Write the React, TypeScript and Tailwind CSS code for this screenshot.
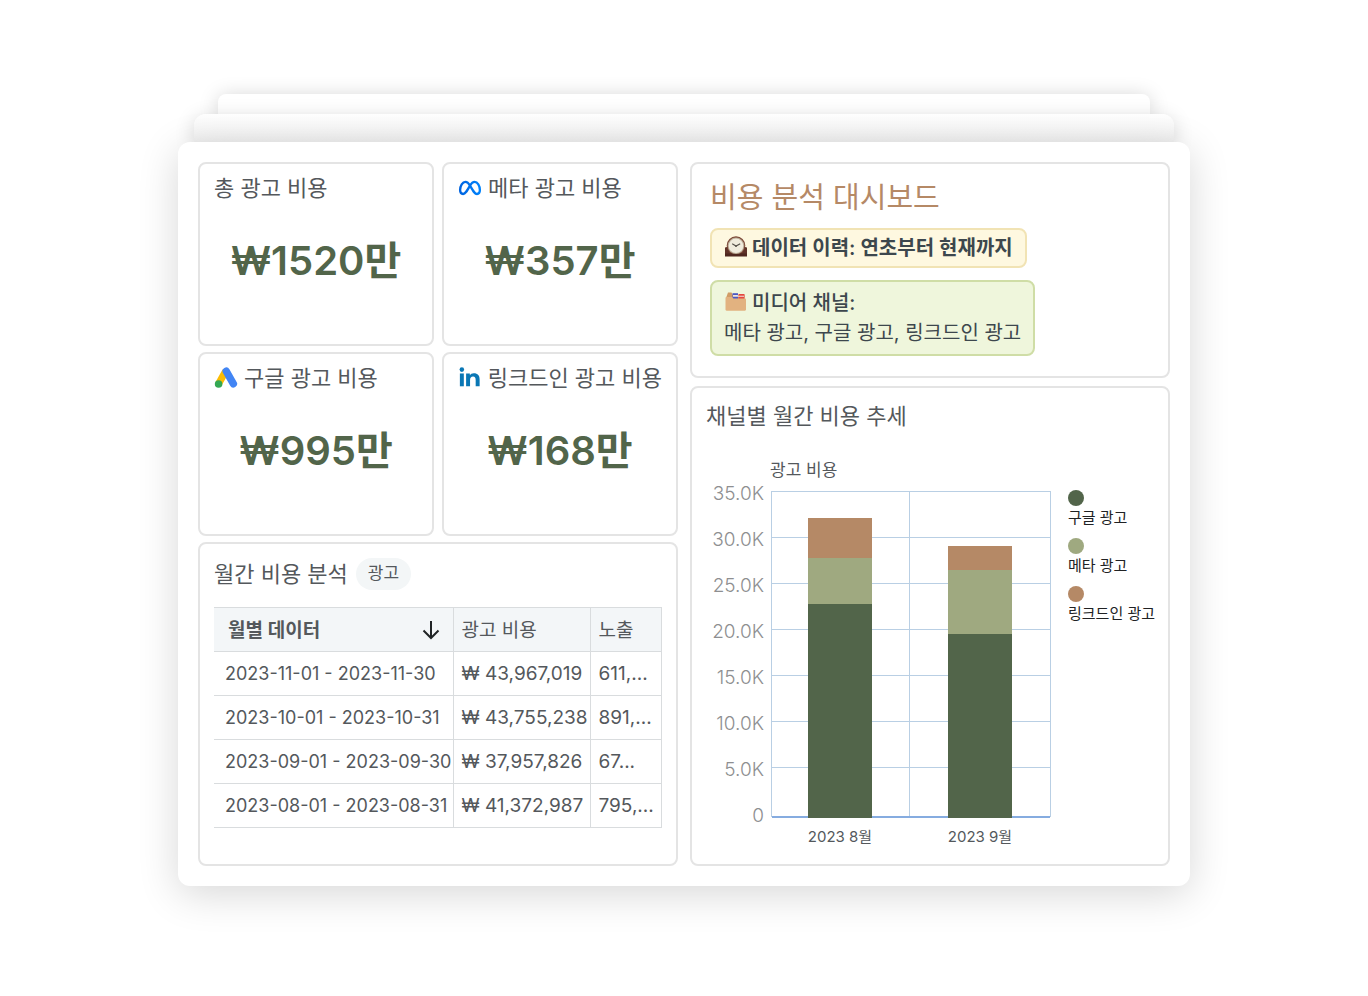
import type { ReactNode } from 'react'

interface MetricCardProps {
  title: string
  value: string
  icon?: ReactNode
}

interface SpendRow {
  period: string
  cost: string
  impressions: string
}

interface Channel {
  name: string
  color: string
}

const CHANNELS: Channel[] = [
  { name: '구글 광고', color: '#52654a' },
  { name: '메타 광고', color: '#9fa980' },
  { name: '링크드인 광고', color: '#b58966' }
]

const ROWS: SpendRow[] = [
  { period: '2023-11-01 - 2023-11-30', cost: '₩ 43,967,019', impressions: '611,...' },
  { period: '2023-10-01 - 2023-10-31', cost: '₩ 43,755,238', impressions: '891,...' },
  { period: '2023-09-01 - 2023-09-30', cost: '₩ 37,957,826', impressions: '67...' },
  { period: '2023-08-01 - 2023-08-31', cost: '₩ 41,372,987', impressions: '795,...' }
]

const Y_TICKS = ['35.0K', '30.0K', '25.0K', '20.0K', '15.0K', '10.0K', '5.0K', '0']

// Segment heights run from the base of the bar upwards, in CHANNELS order
const BARS = [
  { label: '2023 8월', x: 102, segments: [214, 46, 40] },
  { label: '2023 9월', x: 242, segments: [184, 64, 24] }
]

const CHART_BASE = 362

function MetaIcon() {
  return (
    <svg className="w-6 h-6" viewBox="0 0 24 24" fill="none" aria-hidden="true">
      <defs>
        <linearGradient id="meta" x1="0" y1="0" x2="1" y2="0">
          <stop offset="0" stopColor="#0064e0" />
          <stop offset="1" stopColor="#0082fb" />
        </linearGradient>
      </defs>
      <path
        d="M12 9.6C10.6 7.2 9.4 5.9 7.5 5.9C4.6 5.9 2.1 9.9 2.1 14.1C2.1 16.5 3.2 18 5.1 18C7.2 18 8.5 15.8 12 9.6C13.4 7.2 14.7 5.9 16.6 5.9C19.5 5.9 21.9 9.9 21.9 14.1C21.9 16.5 20.8 18 19 18C16.8 18 15.5 15.6 12 9.6Z"
        stroke="url(#meta)"
        strokeWidth="2.3"
        strokeLinejoin="round"
      />
    </svg>
  )
}

function GoogleAdsIcon() {
  return (
    <svg className="w-6 h-6" viewBox="0 0 24 24" fill="none" aria-hidden="true">
      <path d="M11.6 5.2L4.6 17.8" stroke="#fbbc04" strokeWidth="7" />
      <path d="M12.2 5.2L19.4 17.8" stroke="#4285f4" strokeWidth="7.4" strokeLinecap="round" />
      <circle cx="4.6" cy="18" r="3.8" fill="#34a853" />
    </svg>
  )
}

function LinkedInIcon() {
  return (
    <svg className="w-6 h-6" viewBox="0 0 24 24" fill="#0a77b5" aria-hidden="true">
      <circle cx="3.9" cy="3.5" r="2.3" />
      <path d="M1.9 7.4H5.9V20.4H1.9Z" />
      <path d="M8.2 7.4H12V9.1C12.7 7.9 14.1 7.1 16 7.1C20.1 7.1 21.9 9.4 21.9 13.4V20.4H17.9V14.3C17.9 12 17.2 10.6 15.2 10.6C13.3 10.6 12.2 12 12.2 14.3V20.4H8.2Z" />
    </svg>
  )
}

function ClockIcon() {
  return (
    <svg className="w-6 h-6" viewBox="0 0 24 24" aria-hidden="true">
      <path d="M1 11.5C3 11.5 3.6 10.5 4 9H20C20.4 10.5 21 11.5 23 11.5V19H1Z" fill="#5f3228" />
      <circle cx="12" cy="9.6" r="9.3" fill="#7b4636" />
      <path d="M1 17.5H23V20.5H1Z" fill="#4f271f" />
      <circle cx="12" cy="9.8" r="8.3" fill="#b9ab95" />
      <circle cx="12" cy="9.8" r="7.3" fill="#f0ebdd" />
      <path d="M8.2 7.8L12 10L16.2 7.8" stroke="#55504a" strokeWidth="1.1" fill="none" />
      <circle cx="12" cy="10" r="0.9" fill="#55504a" />
    </svg>
  )
}

function DividersIcon() {
  return (
    <svg className="w-6 h-6" viewBox="0 0 24 24" aria-hidden="true">
      <path d="M2 7L4 1.6H7.5L9 4H20.5V9H2Z" fill="#d19c66" />
      <path d="M8.5 2.2H14V8H8.5Z" fill="#4a58c4" />
      <path d="M14.5 3H20.5V8H14.5Z" fill="#e5483f" />
      <path d="M9 4H13.5L14.5 4.8H20V5.8H9Z" fill="#efe3df" />
      <path d="M1.5 7.2C1.5 6.5 1.9 6.1 2.6 6.1H8L9.4 7.4H20.9C21.6 7.4 22 7.8 22 8.5V18.6C22 19.3 21.6 19.7 20.9 19.7H2.6C1.9 19.7 1.5 19.3 1.5 18.6Z" fill="#e2b280" />
    </svg>
  )
}

function MetricCard({ title, value, icon }: MetricCardProps) {
  return (
    <section className="h-46 rounded-lg border-2 border-[#e4e4e4] px-3.5 pt-2">
      <h2 className="flex h-8 items-center gap-1.5 whitespace-nowrap text-[22px] text-[#54585c]">
        {icon}
        {title}
      </h2>
      <p className="mt-[25px] text-center text-[40px] leading-[64px] font-semibold text-[#52654a]">{value}</p>
    </section>
  )
}

function SpendTable() {
  return (
    <section className="grow rounded-lg border-2 border-[#e4e4e4] px-3.5 pt-3.5">
      <div className="flex h-8 items-center gap-2">
        <h2 className="text-[22px] text-[#54585c]">월간 비용 분석</h2>
        <span className="flex h-8 items-center rounded-full bg-[#f3f6f7] px-3 text-[17px] text-[#54585c]">광고</span>
      </div>
      <table className="mt-[17px] w-full table-fixed border-collapse text-left text-[#54585c]">
        <colgroup>
          <col className="w-[239px]" />
          <col className="w-[137px]" />
          <col />
        </colgroup>
        <thead>
          <tr className="h-11 border-y border-[#d9dcde] bg-[#f3f6f8] text-[19px]">
            <th className="border-r border-[#d9dcde] pt-1 pr-2.5 pl-3.5 font-semibold">
              <span className="flex items-center justify-between">
                월별 데이터
                <button type="button" aria-label="정렬">
                  <svg className="w-6 h-6" viewBox="0 0 24 24" fill="none" stroke="#202426" strokeWidth="2" aria-hidden="true">
                    <path d="M12 1V18M4.5 10.5L12 18L19.5 10.5" />
                  </svg>
                </button>
              </span>
            </th>
            <th className="border-r border-[#d9dcde] px-2 pt-1 font-normal">광고 비용</th>
            <th className="border-r border-[#d9dcde] px-2 pt-1 font-normal">노출</th>
          </tr>
        </thead>
        <tbody className="text-[19px] whitespace-nowrap">
          {ROWS.map((row) => (
            <tr key={row.period} className="h-11 border-b border-[#d9dcde]">
              <td className="border-r border-[#d9dcde] pl-[11px] text-lg">{row.period}</td>
              <td className="border-r border-[#d9dcde] pt-0.5 pl-2">{row.cost}</td>
              <td className="border-r border-[#d9dcde] pt-0.5 pl-2">{row.impressions}</td>
            </tr>
          ))}
        </tbody>
      </table>
    </section>
  )
}

function Overview() {
  return (
    <section className="flex h-54 flex-col items-start rounded-lg border-2 border-[#e4e4e4] px-4.5 pt-3.5">
      <h1 className="text-[29px] leading-10 text-[#b58966]">비용 분석 대시보드</h1>
      <p className="mt-2.5 flex h-10 items-center gap-1 whitespace-nowrap rounded-lg border-2 border-[#f1e3b4] bg-[#fef8e0] px-3 text-xl font-semibold text-[#3d474d]">
        <ClockIcon />
        데이터 이력: 연초부터 현재까지
      </p>
      <div className="mt-3 whitespace-nowrap rounded-lg border-2 border-[#cfdda6] bg-[#eff6dc] px-3 py-1.5 text-xl leading-[30px] text-[#3d474d]">
        <p className="flex items-center gap-1 font-medium">
          <DividersIcon />
          미디어 채널:
        </p>
        <p>메타 광고, 구글 광고, 링크드인 광고</p>
      </div>
    </section>
  )
}

function TrendChart() {
  return (
    <svg className="h-[400px] w-[346px] shrink-0" viewBox="0 0 346 400" role="img" aria-label="채널별 월간 비용 추세">
      <text x="64" y="20" fontSize="17" fill="#54585c">
        광고 비용
      </text>
      {Y_TICKS.map((tick, i) => (
        <text key={tick} x="58" y={44 + i * 46} fontSize="19" fontWeight="300" textAnchor="end" fill="#8e8f91">
          {tick}
        </text>
      ))}
      <g stroke="#b9cfe4" shapeRendering="crispEdges">
        {Y_TICKS.slice(0, -1).map((tick, i) => (
          <line key={tick} x1="65" x2="345" y1={35.5 + i * 46} y2={35.5 + i * 46} />
        ))}
        <line x1="65.5" x2="65.5" y1="35" y2="361" />
        <line x1="203.5" x2="203.5" y1="35" y2="361" />
        <line x1="344.5" x2="344.5" y1="35" y2="361" />
      </g>
      <rect x="66" y="360" width="278" height="2" fill="#86ace0" />
      {BARS.map((bar) => {
        let top = CHART_BASE
        return (
          <g key={bar.label}>
            {bar.segments.map((height, i) => {
              top -= height
              return <rect key={CHANNELS[i].name} x={bar.x} y={top} width="64" height={height} fill={CHANNELS[i].color} />
            })}
            <text x={bar.x + 32} y="386" fontSize="15" textAnchor="middle" fill="#54585c">
              {bar.label}
            </text>
          </g>
        )
      })}
    </svg>
  )
}

function TrendCard() {
  return (
    <section className="grow rounded-lg border-2 border-[#e4e4e4] px-3.5 pt-3 pb-2">
      <h2 className="text-[22px] leading-8 text-[#54585c]">채널별 월간 비용 추세</h2>
      <div className="mt-6 flex gap-4">
        <TrendChart />
        <ul className="flex flex-col gap-2 pt-8.5 text-[15px] leading-6 whitespace-nowrap text-[#202224]">
          {CHANNELS.map((channel) => (
            <li key={channel.name}>
              <span className="block size-4 rounded-full" style={{ backgroundColor: channel.color }} />
              {channel.name}
            </li>
          ))}
        </ul>
      </div>
    </section>
  )
}

export default function App() {
  return (
    <main className="min-h-screen bg-white px-4 py-[94px] font-[Inter,'Noto_Sans_CJK_KR',sans-serif]">
      <div className="mx-auto max-w-[1012px]">
        {/* Edges of the two cards stacked behind the dashboard */}
        <div className="mx-10 h-5 rounded-t-lg bg-white shadow-[0_2px_20px_rgba(0,0,0,0.18)]" />
        <div className="relative mx-4 h-7 rounded-t-xl bg-linear-to-b from-white to-[#f0f0f0] shadow-[0_4px_20px_rgba(0,0,0,0.16)]" />
        <div className="relative flex gap-3 rounded-xl bg-white p-5 shadow-[0_8px_40px_rgba(0,0,0,0.16)]">
          <div className="flex min-w-0 flex-1 flex-col gap-1.5">
            <div className="grid grid-cols-2 gap-x-2 gap-y-1.5">
              <MetricCard title="총 광고 비용" value="₩1520만" />
              <MetricCard title="메타 광고 비용" value="₩357만" icon={<MetaIcon />} />
              <MetricCard title="구글 광고 비용" value="₩995만" icon={<GoogleAdsIcon />} />
              <MetricCard title="링크드인 광고 비용" value="₩168만" icon={<LinkedInIcon />} />
            </div>
            <SpendTable />
          </div>
          <div className="flex min-w-0 flex-1 flex-col gap-2">
            <Overview />
            <TrendCard />
          </div>
        </div>
      </div>
    </main>
  )
}
